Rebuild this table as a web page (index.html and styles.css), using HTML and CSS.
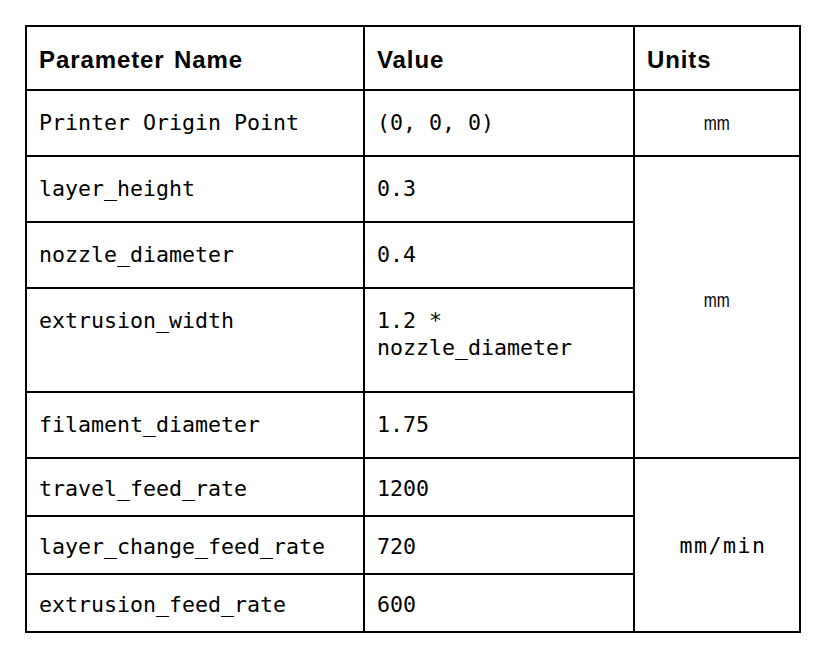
FILE: index.html
```html
<!DOCTYPE html>
<html>
<head>
<meta charset="utf-8">
<link rel="stylesheet" href="styles.css">
</head>
<body>
<div class="page">
<table class="params">
<colgroup><col class="c-name"><col class="c-value"><col class="c-units"></colgroup>
<thead>
<tr class="row-head"><th>Parameter Name</th><th>Value</th><th>Units</th></tr>
</thead>
<tbody>
<tr class="row"><td>Printer Origin Point</td><td>(0, 0, 0)</td><td class="unit"><span class="narrow">mm</span></td></tr>
<tr class="row"><td>layer_height</td><td>0.3</td><td class="unit unit-raised" rowspan="4"><span class="narrow">mm</span></td></tr>
<tr class="row"><td>nozzle_diameter</td><td>0.4</td></tr>
<tr class="row-tall"><td>extrusion_width</td><td>1.2 * nozzle_diameter</td></tr>
<tr class="row"><td>filament_diameter</td><td>1.75</td></tr>
<tr class="row-short"><td>travel_feed_rate</td><td>1200</td><td class="unit unit-mono" rowspan="3">mm/min</td></tr>
<tr class="row-short"><td>layer_change_feed_rate</td><td>720</td></tr>
<tr class="row-short"><td>extrusion_feed_rate</td><td>600</td></tr>
</tbody>
</table>
</div>
</body>
</html>
```
FILE: styles.css
```css
html, body {
  margin: 0;
  padding: 0;
  background: #ffffff;
}
.page {
  padding: 25px 0 0 25px;
}
.params {
  border-collapse: collapse;
  table-layout: fixed;
  width: 774px;
  color: #000;
}
.c-name { width: 338px; }
.c-value { width: 270px; }
.c-units { width: 166px; }
.params th,
.params td {
  border: 2px solid #000;
  padding: 0 12px;
  text-align: left;
}
.params th {
  font-family: "Liberation Sans", Arial, sans-serif;
  font-weight: bold;
  font-size: 24px;
  letter-spacing: 0.9px;
  word-spacing: 2px;
  vertical-align: middle;
  padding-top: 3px;
}
.params td {
  font-family: "DejaVu Sans Mono", "Liberation Mono", monospace;
  font-size: 21.6px;
  line-height: 27px;
  vertical-align: top;
  padding-top: 18px;
}
.row-head { height: 64px; }
.row { height: 66px; }
.row-tall { height: 104px; }
.row-short { height: 58px; }
.row-short td { padding-top: 16px; }
.params td.unit {
  text-align: center;
  vertical-align: middle;
  padding-top: 0;
}
.params td.unit-raised {
  padding-bottom: 14px;
}
.params td.unit-mono {
  letter-spacing: 1.5px;
  padding-left: 24px;
  padding-right: 12px;
}
.narrow {
  display: inline-block;
  font-family: "Liberation Sans", Arial, sans-serif;
  font-size: 20px;
  transform: scaleX(0.78);
}
```
